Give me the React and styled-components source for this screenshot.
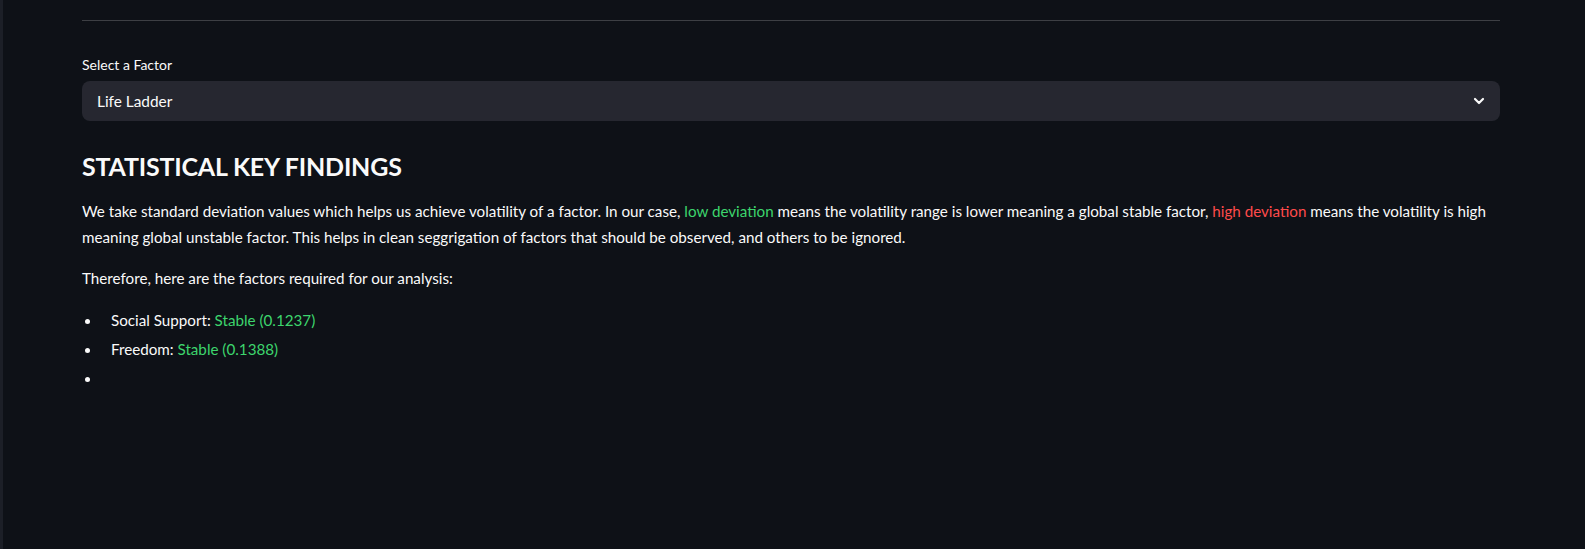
import React from 'react';
import styled, { createGlobalStyle } from 'styled-components';

const GlobalStyle = createGlobalStyle`
  html, body {
    margin: 0;
    padding: 0;
    background: #0e1117;
  }
  body {
    font-family: 'Lato', 'Noto Sans', sans-serif;
    color: #fafafa;
    -webkit-font-smoothing: antialiased;
  }
`;

const Page = styled.div`
  display: flex;
  min-height: 549px;
  background: #0e1117;
`;

const SideEdge = styled.div`
  width: 3px;
  flex-shrink: 0;
  background: #1c1f27;
`;

const Main = styled.main`
  flex: 1;
  padding: 20px 85px 40px 79px;
`;

const Divider = styled.hr`
  margin: 0;
  border: none;
  height: 1px;
  background: rgba(250, 250, 250, 0.2);
`;

const Field = styled.div`
  margin-top: 33px;
`;

const Label = styled.label`
  display: block;
  font-size: 14px;
  line-height: 22px;
  margin-bottom: 5px;
  color: #fafafa;
`;

const SelectBox = styled.div`
  display: flex;
  align-items: center;
  justify-content: space-between;
  height: 40px;
  padding: 0 13px 0 15px;
  border-radius: 8px;
  background: #262730;
  font-size: 15.4px;
  cursor: pointer;
`;

const Heading = styled.h3`
  margin: 31px 0 0;
  font-size: 25px;
  line-height: 29px;
  font-weight: 700;
  letter-spacing: -0.2px;
`;

const Text = styled.p`
  margin: ${(p) => p.$top || 16}px 0 0;
  font-size: 15.2px;
  line-height: 25.6px;
`;

const Tone = styled.span`
  color: ${(p) => (p.$tone === 'red' ? '#ff4b4b' : '#3dd56d')};
`;

const List = styled.ul`
  margin: 16px 0 0;
  padding: 0;
  list-style: none;
  font-size: 15.2px;
  line-height: 25.6px;
`;

const Item = styled.li`
  display: flex;
  align-items: center;
  min-height: 25.6px;
  margin-bottom: 3.4px;

  &::before {
    content: '';
    flex-shrink: 0;
    width: 5px;
    height: 5px;
    border-radius: 50%;
    background: #fafafa;
    margin: 1px 21px 0 3px;
  }
`;

const Chevron = () => (
  <svg width="16" height="16" viewBox="0 0 16 16" fill="none">
    <polyline points="4,6 8,10 12,6" stroke="#fafafa" strokeWidth="2.2" strokeLinecap="round" strokeLinejoin="round" />
  </svg>
);

const factors = [
  { name: 'Social Support', value: 'Stable (0.1237)' },
  { name: 'Freedom', value: 'Stable (0.1388)' },
];

export default function App() {
  return (
    <>
      <GlobalStyle />
      <Page>
        <SideEdge />
        <Main>
          <Divider />
          <Field>
            <Label>Select a Factor</Label>
            <SelectBox>
              <span>Life Ladder</span>
              <Chevron />
            </SelectBox>
          </Field>
          <Heading>STATISTICAL KEY FINDINGS</Heading>
          <Text $top={18}>
            We take standard deviation values which helps us achieve volatility of a factor. In our case,{' '}
            <Tone $tone="green">low deviation</Tone> means the volatility range is lower meaning a global stable factor,{' '}
            <Tone $tone="red">high deviation</Tone> means the volatility is high meaning global unstable factor. This helps
            in clean seggrigation of factors that should be observed, and others to be ignored.
          </Text>
          <Text>Therefore, here are the factors required for our analysis:</Text>
          <List>
            {factors.map((f) => (
              <Item key={f.name}>
                <span>
                  {f.name}: <Tone $tone="green">{f.value}</Tone>
                </span>
              </Item>
            ))}
            <Item />
          </List>
        </Main>
      </Page>
    </>
  );
}
